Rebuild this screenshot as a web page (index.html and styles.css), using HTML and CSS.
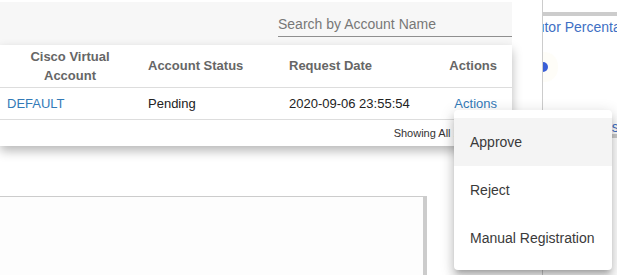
FILE: index.html
```html
<!DOCTYPE html>
<html lang="en">

<head>
  <meta charset="UTF-8">
  <meta name="viewport" content="width=device-width, initial-scale=1.0">
  <title>Registration Requests</title>

  <link rel="stylesheet" href="styles.css">
</head>

<body>

  <div class="page">

    <!-- 左側主要區塊 -->
    <div class="main">
      <div class="toolbar">
        <input class="search" type="text" placeholder="Search by Account Name">
      </div>

      <div class="card">
        <table class="requests">
          <thead>
            <tr>
              <th class="col-account">Cisco Virtual Account</th>
              <th class="col-status">Account Status</th>
              <th class="col-date">Request Date</th>
              <th class="col-actions">Actions</th>
            </tr>
          </thead>
          <tbody>
            <tr>
              <td class="col-account"><a href="#">DEFAULT</a></td>
              <td>Pending</td>
              <td>2020-09-06 23:55:54</td>
              <td class="col-actions"><a href="#">Actions</a></td>
            </tr>
          </tbody>
          <tfoot>
            <tr>
              <td colspan="4">Showing All 1 - 1 of 1</td>
            </tr>
          </tfoot>
        </table>
      </div>

      <div class="lower">
        <div class="lower-left"></div>
        <div class="lower-right"></div>
      </div>
    </div>

    <!-- 右側面板 -->
    <div class="side">
      <div class="side-bar"></div>
      <div class="side-title"><span>Distributor Percentage</span></div>
      <div class="side-dot"></div>
      <div class="side-link"><a href="#">Details</a></div>
      <div class="side-bar"></div>
    </div>

  </div>

  <!-- 動作選單 -->
  <ul class="menu">
    <li class="menu-item is-hover">Approve</li>
    <li class="menu-item">Reject</li>
    <li class="menu-item">Manual Registration</li>
  </ul>

</body>

</html>
```

FILE: styles.css
```css
* {
  box-sizing: border-box;
}

body {
  margin: 0;
  font-family: "Liberation Sans", Arial, sans-serif;
  color: #222;
  background: #fff;
}

a {
  color: #337ab7;
  text-decoration: none;
}

.page {
  display: flex;
  height: 275px;
  overflow: hidden;
}

/* 主要區塊 */
.main {
  width: 543px;
  flex: none;
  border-right: 1px solid #ccc;
  display: flex;
  flex-direction: column;
}

.toolbar {
  width: 512px;
  height: 43px;
  margin-top: 2px;
  padding-top: 11px;
  background: #f7f7f7;
  display: flex;
  justify-content: flex-end;
}

.search {
  width: 234px;
  height: 24px;
  padding: 0 0 2px;
  border: 0;
  border-bottom: 1px solid #8f8f8f;
  background: transparent;
  font: 14px "Liberation Sans", Arial, sans-serif;
  color: #333;
  outline: none;
}

.search::placeholder {
  color: #777;
}

/* 表格卡片 */
.card {
  width: 512px;
  background: #fff;
  box-shadow: 0 5px 10px rgba(0, 0, 0, 0.28);
  position: relative;
}

.requests {
  width: 100%;
  border-collapse: collapse;
  table-layout: fixed;
  font-size: 13px;
}

.requests th {
  height: 42px;
  padding: 0 8px;
  border-bottom: 1px solid #ddd;
  color: #666;
  font-weight: bold;
  line-height: 19px;
  text-align: left;
}

.requests td {
  height: 32px;
  padding: 0 8px;
  border-bottom: 1px solid #ddd;
}

.requests .col-account {
  width: 140px;
  padding-left: 7px;
}

.requests th.col-account {
  padding: 0 8px;
  text-align: center;
}

.requests .col-status {
  width: 141px;
}

.requests .col-date {
  width: 149px;
}

.requests .col-actions {
  text-align: right;
  padding-right: 15px;
}

.requests tfoot td {
  height: 27px;
  border-bottom: 0;
  padding: 0 15px 0 0;
  font-size: 11px;
  color: #333;
  text-align: right;
}

/* 下方區塊 */
.lower {
  margin-top: 50px;
  flex: 1;
  display: flex;
}

.lower-left {
  width: 427px;
  border-top: 1px solid #ccc;
  border-right: 4px solid #ccc;
  background: #fdfdfd;
}

.lower-right {
  flex: 1;
  background: #fff;
}

/* 右側面板 */
.side {
  flex: 1;
  overflow: hidden;
  padding-top: 12px;
  color: #4070c4;
  font-size: 14px;
}

.side-bar {
  height: 4px;
  background: #ccc;
}

.side-title {
  margin-top: 3px;
  line-height: 16px;
  white-space: nowrap;
}

.side-title span {
  display: block;
  margin-left: -46px;
}

.side-dot {
  width: 10px;
  height: 10px;
  margin: 27px 0 0 -5px;
  border-radius: 50%;
  background: #3a5fd6;
  box-shadow: 0 0 0 10px rgba(250, 240, 190, 0.1);
}

.side-link {
  margin-top: 48px;
  line-height: 14px;
  padding-left: 33px;
  white-space: nowrap;
}

.side-link a {
  color: #4070c4;
}

/* 選單 */
.menu {
  position: absolute;
  left: 454px;
  top: 110px;
  width: 158px;
  margin: 0;
  padding: 8px 0;
  list-style: none;
  background: #fff;
  border-radius: 4px;
  box-shadow: 0 5px 5px -3px rgba(0, 0, 0, 0.2), 0 8px 10px 1px rgba(0, 0, 0, 0.14), 0 3px 14px 2px rgba(0, 0, 0, 0.12);
}

.menu-item {
  height: 48px;
  padding: 0 16px;
  display: flex;
  align-items: center;
  font-size: 14px;
  color: #3a3a3a;
  white-space: nowrap;
}

.menu-item.is-hover {
  background: #f4f4f4;
}
```
